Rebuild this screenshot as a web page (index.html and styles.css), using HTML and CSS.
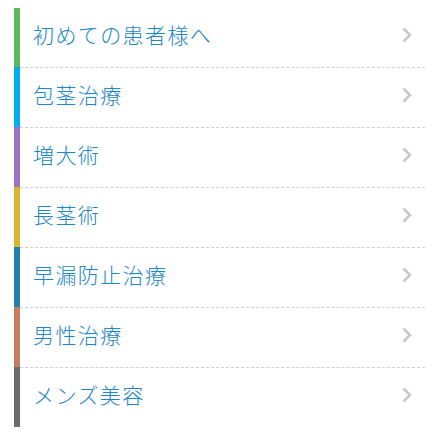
FILE: index.html
```html
<!DOCTYPE html>
<html lang="ja">
<head>
    <meta charset="UTF-8">
    <meta name="viewport" content="width=device-width, initial-scale=1.0">
    <title>メニュー</title>
    <link rel="stylesheet" href="styles.css">
</head>
<body>
    <ul class="menu">
        <li class="menu-item green"><a href="#"><span>初めての患者様へ</span><svg class="arrow" viewBox="0 0 10 16" width="10" height="16"><polyline points="1.5,1.5 8,8 1.5,14.5"/></svg></a></li>
        <li class="menu-item blue"><a href="#"><span>包茎治療</span><svg class="arrow" viewBox="0 0 10 16" width="10" height="16"><polyline points="1.5,1.5 8,8 1.5,14.5"/></svg></a></li>
        <li class="menu-item purple"><a href="#"><span>増大術</span><svg class="arrow" viewBox="0 0 10 16" width="10" height="16"><polyline points="1.5,1.5 8,8 1.5,14.5"/></svg></a></li>
        <li class="menu-item yellow"><a href="#"><span>長茎術</span><svg class="arrow" viewBox="0 0 10 16" width="10" height="16"><polyline points="1.5,1.5 8,8 1.5,14.5"/></svg></a></li>
        <li class="menu-item teal"><a href="#"><span>早漏防止治療</span><svg class="arrow" viewBox="0 0 10 16" width="10" height="16"><polyline points="1.5,1.5 8,8 1.5,14.5"/></svg></a></li>
        <li class="menu-item brown"><a href="#"><span>男性治療</span><svg class="arrow" viewBox="0 0 10 16" width="10" height="16"><polyline points="1.5,1.5 8,8 1.5,14.5"/></svg></a></li>
        <li class="menu-item gray"><a href="#"><span>メンズ美容</span><svg class="arrow" viewBox="0 0 10 16" width="10" height="16"><polyline points="1.5,1.5 8,8 1.5,14.5"/></svg></a></li>
    </ul>
</body>
</html>
```

FILE: styles.css
```css
* {
    margin: 0;
    padding: 0;
    box-sizing: border-box;
}

body {
    font-family: "Noto Sans CJK JP", "Noto Sans", sans-serif;
    background: #fff;
    padding: 8px 12px 0 14px;
}

.menu {
    list-style: none;
}

.menu-item {
    border-left: 6px solid #ccc;
}

.menu-item a {
    display: flex;
    align-items: center;
    justify-content: space-between;
    height: 59px;
    padding: 0 13px 7px 13px;
    color: #2086c8;
    font-size: 21px;
    font-weight: 300;
    letter-spacing: 1.4px;
    line-height: 1;
    text-decoration: none;
}

.menu-item + .menu-item a {
    height: 60px;
    border-top: 1px dashed #cfcfcf;
}

.arrow {
    fill: none;
    stroke: #c8c8c8;
    stroke-width: 2.6;
    margin-top: 1px;
}

.green { border-left-color: #5cb85c; }
.blue { border-left-color: #00aeef; }
.purple { border-left-color: #9b73c1; }
.yellow { border-left-color: #dab42c; }
.teal { border-left-color: #2280a8; }
.brown { border-left-color: #c77e60; }
.gray { border-left-color: #6b6b6b; }
```
